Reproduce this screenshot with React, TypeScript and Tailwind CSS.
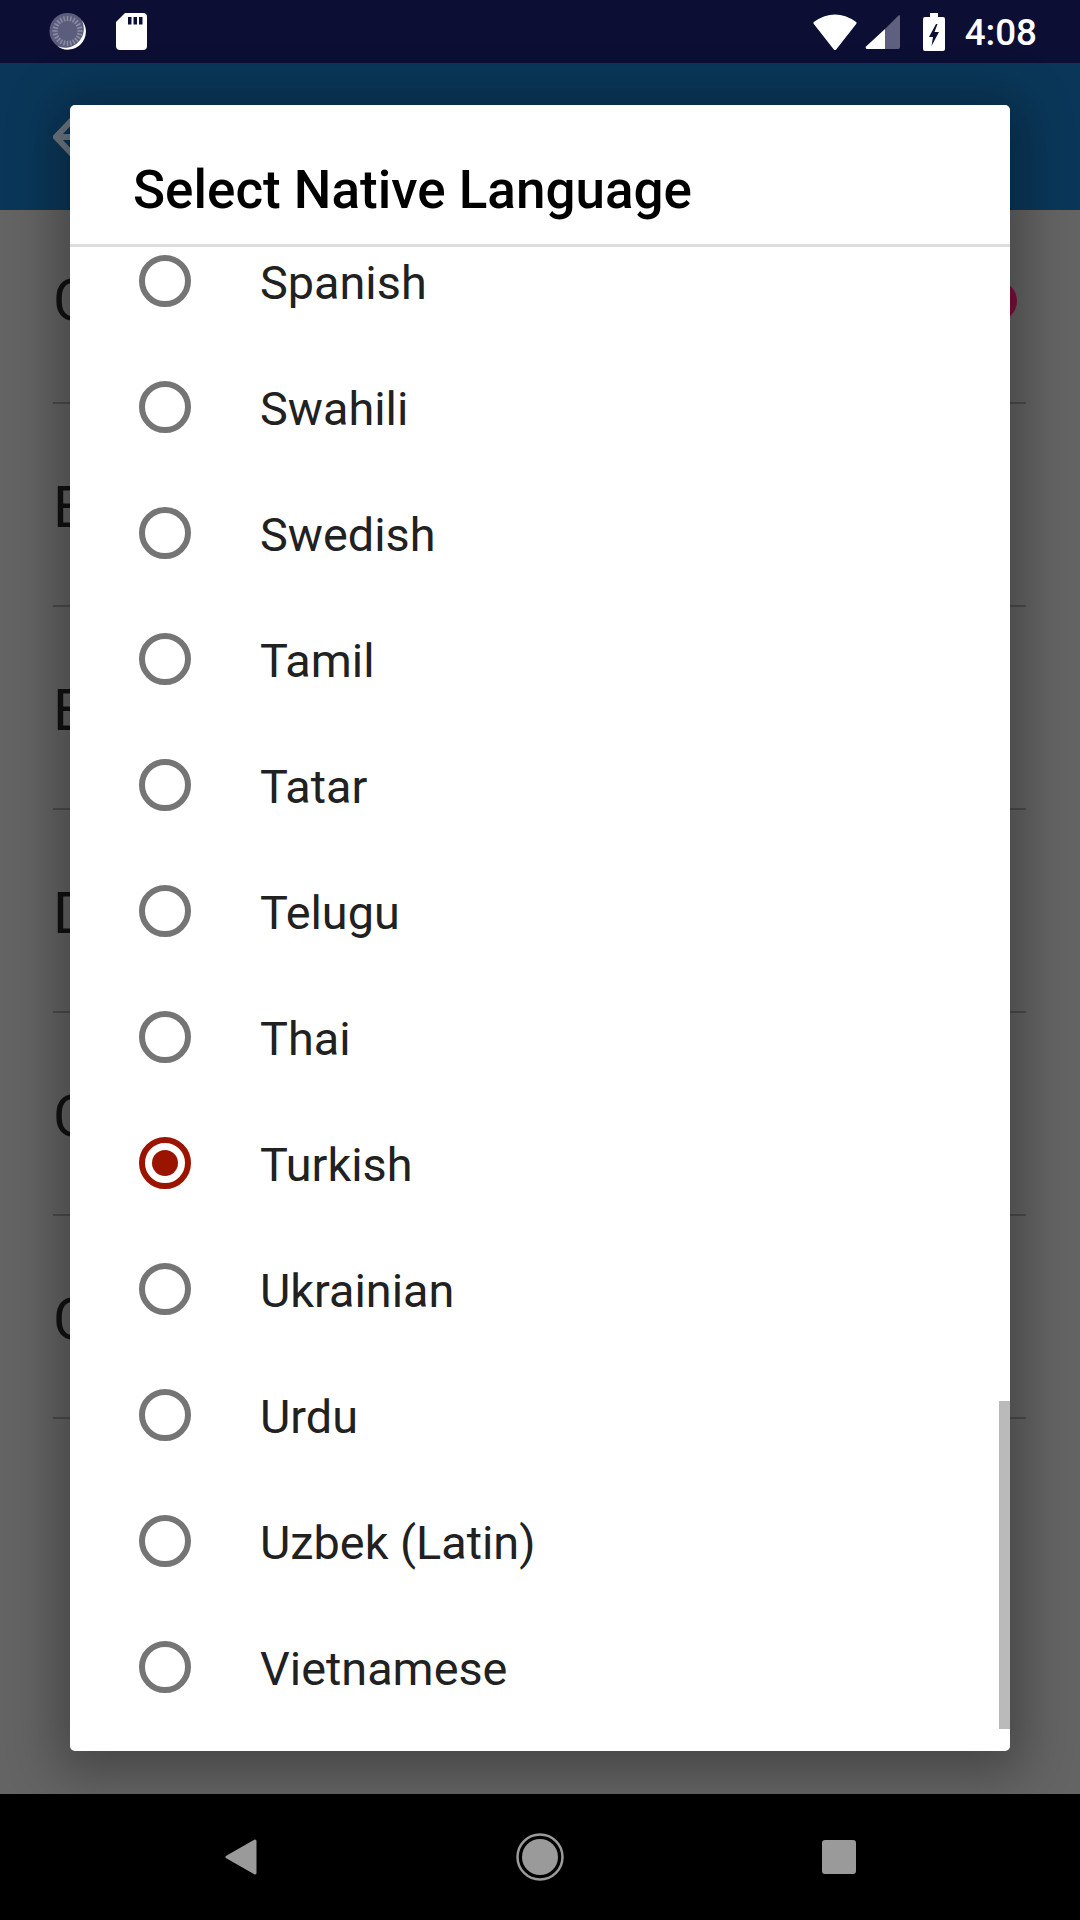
const languages = ['Spanish', 'Swahili', 'Swedish', 'Tamil', 'Tatar', 'Telugu', 'Thai', 'Turkish', 'Ukrainian', 'Urdu', 'Uzbek (Latin)', 'Vietnamese']
const selected = 'Turkish'

const letters = ['E', 'E', 'D', 'C', 'C']

function Spinner() {
  const ticks = Array.from({ length: 24 }, (_, i) => i * 15)
  return (
    <svg width="38" height="37" viewBox="0 0 38 37">
      <circle cx="18.5" cy="18" r="18" fill="#5b5d7c" />
      {ticks.map((deg) => (
        <line key={deg} x1="18.5" y1="3" x2="18.5" y2="8" stroke="#8a8ba3" strokeWidth="1.6" transform={`rotate(${deg} 18.5 18)`} />
      ))}
      <path d="M33 7.5A18 18 0 0 1 8 33 A19 19 0 0 0 33 7.5Z" fill="#ffffff" />
    </svg>
  )
}

function SdCard() {
  return (
    <svg width="31" height="37" viewBox="0 0 31 37">
      <path d="M9 0H27a4 4 0 0 1 4 4V33a4 4 0 0 1-4 4H4a4 4 0 0 1-4-4V9Z" fill="#ffffff" />
      <rect x="12" y="4" width="3.5" height="7.5" fill="#0c0f33" />
      <rect x="17.5" y="4" width="3.5" height="7.5" fill="#0c0f33" />
      <rect x="23" y="4" width="3.5" height="7.5" fill="#0c0f33" />
    </svg>
  )
}

function Wifi() {
  return (
    <svg width="44" height="36" viewBox="0 0 44 36">
      <path d="M22 34.5L2 9Q22 -5 42 9Z" fill="#ffffff" stroke="#ffffff" strokeWidth="3" strokeLinejoin="round" />
    </svg>
  )
}

function Signal() {
  return (
    <svg width="35" height="35" viewBox="0 0 35 35">
      <path d="M20 15L33.5 1.5a0.9 0.9 0 0 1 1.5 0.6V33a2 2 0 0 1-2 2H20Z" fill="#5f6080" />
      <path d="M20 15V35H2a1.5 1.5 0 0 1-1-2.5Z" fill="#ffffff" />
    </svg>
  )
}

function Battery() {
  return (
    <svg width="22" height="38" viewBox="0 0 22 38">
      <path d="M7 0H15V4H20a2 2 0 0 1 2 2V36a2 2 0 0 1-2 2H2a2 2 0 0 1-2-2V6a2 2 0 0 1 2-2H7Z" fill="#ffffff" />
      <path d="M13 11L6 24H10L8.5 33L16 19H11.5L14.5 11Z" fill="#0c0f33" />
    </svg>
  )
}

function Radio({ checked }: { checked: boolean }) {
  if (checked) {
    return (
      <div className="flex h-[52px] w-[52px] shrink-0 items-center justify-center rounded-full border-[6px] border-[#9b1400]">
        <div className="h-[26px] w-[26px] rounded-full bg-[#9b1400]" />
      </div>
    )
  }
  return <div className="h-[52px] w-[52px] shrink-0 rounded-full border-[6px] border-[#757575]" />
}

export default function App() {
  return (
    <div className="relative flex h-[1920px] w-[1080px] flex-col overflow-hidden bg-[#646464] font-['Roboto',sans-serif]">
      <div className="flex h-[63px] shrink-0 items-center justify-between bg-[#0c0f33] pl-[49px] pr-[43px]">
        <div className="flex items-center gap-[29px]">
          <Spinner />
          <SdCard />
        </div>
        <div className="flex items-center">
          <Wifi />
          <div className="ml-2"><Signal /></div>
          <div className="ml-[23px]"><Battery /></div>
          <span className="ml-[20px] pt-[4px] text-[36.75px] font-medium leading-none text-white">4:08</span>
        </div>
      </div>

      <div className="flex h-[147px] shrink-0 items-center bg-[#0a3759] pl-[53px]">
        <svg width="44" height="40" viewBox="0 0 44 40" className="text-[#6f7a84]">
          <path d="M20 2L3 20L20 38M3 20H42" fill="none" stroke="currentColor" strokeWidth="6" />
        </svg>
      </div>

      <div className="flex flex-1 flex-col pl-[53px] pr-[54px]">
        <div className="flex h-[194px] items-center justify-between border-b-2 border-[#4c4c4c] pb-[11px]">
          <span className="text-[57.75px] leading-none text-[#111111]">C</span>
          <div className="mr-[9px] h-[40px] w-[40px] rounded-full bg-[#800e3c]" />
        </div>
        {letters.map((letter, i) => (
          <div key={i} className="flex h-[203px] items-center border-b-2 border-[#4c4c4c] pt-[6px]">
            <span className="text-[57.75px] leading-none text-[#111111]">{letter}</span>
          </div>
        ))}
      </div>

      <div className="flex h-[126px] shrink-0 items-center bg-black pl-[225px]">
        <svg width="32" height="36" viewBox="0 0 32 36">
          <path d="M30 2L2 18L30 34Z" fill="#9a9a9a" stroke="#9a9a9a" strokeWidth="3" strokeLinejoin="round" />
        </svg>
        <svg width="48" height="48" viewBox="0 0 48 48" className="ml-[259px]">
          <circle cx="24" cy="24" r="22.5" fill="none" stroke="#9a9a9a" strokeWidth="2.5" />
          <circle cx="24" cy="24" r="18" fill="#9a9a9a" />
        </svg>
        <div className="ml-[258px] h-[34px] w-[34px] rounded-[3px] bg-[#9a9a9a]" />
      </div>

      <div className="absolute left-[70px] top-[105px] flex h-[1646px] w-[940px] flex-col overflow-hidden rounded-[5px] bg-white shadow-[0_8px_50px_14px_rgba(0,0,0,0.3)]">
        <div className="flex h-[142px] shrink-0 items-center border-b-[3px] border-[#dedede] pl-[63px] pt-[31px]">
          <h1 className="text-[53px] font-medium leading-none text-black">Select Native Language</h1>
        </div>
        <div className="flex-1 overflow-hidden">
          <div className="-mt-[29px]">
            {languages.map((lang) => (
              <div key={lang} className="flex h-[126px] items-center gap-[69px] pl-[69px]">
                <Radio checked={lang === selected} />
                <span className="pt-[4px] text-[46.8px] leading-none text-[#212121]">{lang}</span>
              </div>
            ))}
          </div>
        </div>
        <div className="absolute right-0 top-[1296px] h-[328px] w-[11px] bg-[#bababa]" />
      </div>
    </div>
  )
}
